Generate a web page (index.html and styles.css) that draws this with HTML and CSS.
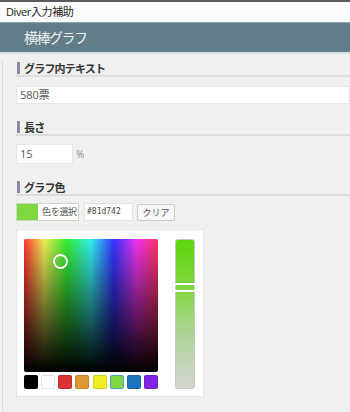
FILE: index.html
```html
<!DOCTYPE html>
<html lang="ja">

<head>
    <meta charset="UTF-8">
    <meta name="viewport" content="width=device-width, initial-scale=1.0">
    <title>Diver入力補助</title>
    <link rel="stylesheet" href="styles.css">
</head>

<body>
    <div class="titlebar">Diver入力補助</div>
    <div class="header">横棒グラフ</div>

    <div class="content">
        <div class="field_title"><span class="mark"></span>グラフ内テキスト</div>
        <div class="text_input wide">580票</div>

        <div class="field_title"><span class="mark"></span>長さ</div>
        <div class="len_row">
            <div class="text_input short">15</div>
            <span class="unit">%</span>
        </div>

        <div class="field_title"><span class="mark"></span>グラフ色</div>
        <div class="color_row">
            <div class="color_btn">
                <span class="swatch_now"></span>
                <span class="btn_text">色を選択</span>
            </div>
            <div class="hex_input">#81d742</div>
            <div class="clear_btn">クリア</div>
        </div>

        <div class="picker">
            <div class="picker_left">
                <div class="square">
                    <span class="square_dot"></span>
                </div>
                <ul class="palette">
                    <li style="background:#000000"></li>
                    <li style="background:#ffffff"></li>
                    <li style="background:#dd3333"></li>
                    <li style="background:#dd9933"></li>
                    <li style="background:#eeee22"></li>
                    <li class="on" style="background:#81d742"></li>
                    <li style="background:#1e73be"></li>
                    <li style="background:#8224e3"></li>
                </ul>
            </div>
            <div class="strip">
                <span class="strip_handle"></span>
            </div>
        </div>
    </div>
</body>

</html>
```

FILE: styles.css
```css
* {
    padding: 0;
    margin: 0;
    box-sizing: border-box;
}

ul,
li {
    list-style: none;
}

body {
    width: 350px;
    height: 412px;
    overflow: hidden;
    background: #f0f0f0;
    font-family: "Open Sans", "Noto Sans CJK JP", sans-serif;
    color: #333;
}

.titlebar {
    height: 22px;
    border-top: 2px solid #5a5a5a;
    background: #fbfbfb;
    padding-left: 6px;
    font-family: "Open Sans", "Noto Sans CJK JP", sans-serif;
    font-size: 11px;
    letter-spacing: -0.4px;
    line-height: 19px;
    color: #222;
}

.header {
    height: 32px;
    border-top: 1px solid #8ea3ac;
    border-bottom: 2px solid #d6e1e5;
    background: #617d88;
    padding-left: 24px;
    font-family: "Noto Sans CJK JP", sans-serif;
    font-size: 14px;
    letter-spacing: -1.5px;
    line-height: 28px;
    color: #eef3f5;
}

.content {
    margin-left: 2px;
    border-left: 1px solid #dcdcdc;
    padding-left: 13px;
    height: 358px;
}

.field_title {
    display: flex;
    align-items: center;
    height: 16px;
    margin-top: 7px;
    border-bottom: 2px solid #dddddd;
    padding-bottom: 1px;
    font-family: "Noto Sans CJK JP", sans-serif;
    font-weight: bold;
    font-size: 11px;
    letter-spacing: -0.8px;
    color: #333;
}

.field_title .mark {
    width: 3px;
    height: 12px;
    margin: 0 4px 0 1px;
    background: #8a8aa8;
}

.text_input {
    background: #fff;
    border: 1px solid #e6e6e6;
    padding-left: 3px;
    font-family: "Open Sans", "Noto Sans CJK JP", sans-serif;
    font-size: 11px;
    color: #555;
}

.wide {
    margin-top: 9px;
    height: 18px;
    line-height: 16px;
    margin-bottom: 16px;
}

.len_row {
    display: flex;
    align-items: center;
    margin-top: 8px;
    margin-bottom: 16px;
}

.short {
    width: 57px;
    height: 20px;
    line-height: 18px;
}

.unit {
    margin-left: 3px;
    font-size: 10px;
    color: #888;
}

.color_row {
    display: flex;
    align-items: center;
    margin-top: 7px;
    height: 18px;
}

.color_btn {
    display: flex;
    width: 63px;
    height: 18px;
    border: 1px solid #c9d9c2;
    background: #fff;
}

.swatch_now {
    width: 21px;
    background: #81d742;
}

.btn_text {
    padding-left: 4px;
    font-family: "Noto Sans CJK JP", sans-serif;
    font-size: 9px;
    letter-spacing: -0.3px;
    line-height: 16px;
    color: #555;
}

.hex_input {
    width: 49px;
    height: 18px;
    margin-left: 5px;
    background: #fff;
    border: 1px solid #e2e2e2;
    padding-left: 2px;
    font-family: "DejaVu Sans Mono", monospace;
    font-size: 8px;
    line-height: 15px;
    color: #444;
}

.clear_btn {
    width: 38px;
    height: 17px;
    margin-left: 4px;
    background: #f7f7f7;
    border: 1px solid #cccccc;
    border-radius: 2px;
    text-align: center;
    font-family: "Noto Sans CJK JP", sans-serif;
    font-size: 9px;
    line-height: 15px;
    color: #555;
}

.picker {
    display: flex;
    gap: 17px;
    width: 188px;
    height: 168px;
    margin-top: 8px;
    padding: 9px 0 0 7px;
    background: #fff;
    border: 1px solid #e6e6e6;
}

.square {
    position: relative;
    width: 134px;
    height: 133px;
    border-radius: 2px;
    background:
        linear-gradient(to bottom, rgba(0, 0, 0, 0), #000),
        linear-gradient(to right, #f33, #ee5 15%, #3e3 32%, #3ee 50%, #33f 67%, #e3e 84%, #f36);
}

.square_dot {
    position: absolute;
    left: 29px;
    top: 15px;
    width: 15px;
    height: 15px;
    border: 2px solid #fff;
    border-radius: 50%;
    box-shadow: 0 0 1px rgba(0, 0, 0, .5);
}

.palette {
    display: flex;
    justify-content: space-between;
    margin-top: 3px;
}

.palette>li {
    width: 14px;
    height: 14px;
    border-radius: 2px;
    border: 1px solid rgba(0, 0, 0, .12);
}

.palette>li.on {
    border-color: #4aa3c7;
}

.strip {
    position: relative;
    width: 20px;
    height: 150px;
    border-radius: 3px;
    border: 1px solid #c4c8c2;
    background: linear-gradient(to bottom, #5cd60a, #81d742 32%, #b0d49a 65%, #d3d5d1);
}

.strip_handle {
    position: absolute;
    left: -3px;
    top: 43px;
    width: 24px;
    height: 9px;
    border: 2px solid #fff;
    border-radius: 3px;
    box-shadow: 0 0 1px rgba(0, 0, 0, .6);
}
```
